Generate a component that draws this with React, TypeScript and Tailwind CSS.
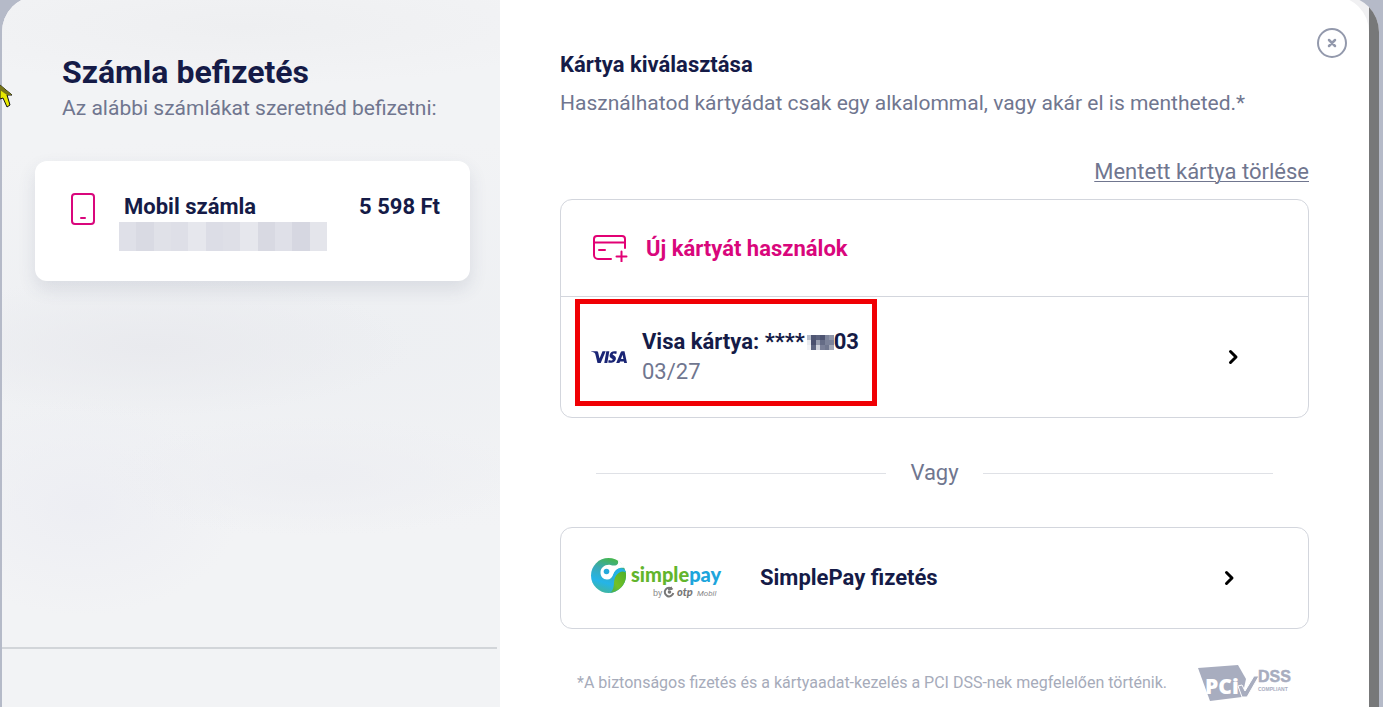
import type { ReactNode } from "react"

const MASK_COLORS = [
  "bg-[#dfe0e8]", "bg-[#d9dae3]", "bg-[#e0e1e8]", "bg-[#dedfe7]", "bg-[#e6e7ed]", "bg-[#dcdde6]",
  "bg-[#dedfe7]", "bg-[#e6e7ed]", "bg-[#d8d9e2]", "bg-[#dfe0e8]", "bg-[#d6d7e1]", "bg-[#e4e5eb]",
]

const DIGIT_COLORS = [
  "bg-[#b9bfcc]", "bg-[#4f5673]", "bg-[#5a617d]", "bg-[#4d5471]", "bg-[#7d849b]", "bg-[#8f95a9]",
  "bg-[#e8eaef]", "bg-[#4a506e]", "bg-[#969cae]", "bg-[#656c86]", "bg-[#7b8299]", "bg-[#7c839b]",
  "bg-[#f3f4f7]", "bg-[#5f6681]", "bg-[#d0d3dc]", "bg-[#7a8098]", "bg-[#70778f]", "bg-[#a2a7b7]",
]

function PhoneIcon() {
  return (
    <svg width="26" height="34" viewBox="0 0 26 34" fill="none" stroke="#d9067c" strokeWidth="2" aria-hidden="true">
      <rect x="2" y="2" width="22" height="30" rx="3" />
      <path d="M11 26h4" strokeLinecap="round" />
    </svg>
  )
}

function NewCardIcon() {
  return (
    <svg width="36" height="28" viewBox="0 0 36 28" fill="none" stroke="#e20074" strokeWidth="2" strokeLinecap="round" strokeLinejoin="round" aria-hidden="true">
      <path d="M19 25H6a4 4 0 0 1-4-4V5a3 3 0 0 1 3-3h25a3 3 0 0 1 3 3v9" />
      <path d="M2 8.500h31M7 16h6M29.500 17.500v10M24.500 22.500h10" />
    </svg>
  )
}

function VisaLogo() {
  return (
    <svg width="36" height="16" viewBox="0 0 36 16" role="img" aria-label="Visa">
      <path d="M0 2.200h5.500c1 0 1.500.4 1.700 1.300l1.300 6.100 3-7.400h3.200L9.700 14H6.500L4.200 4.700C3.500 3.500 1.500 2.800 0 2.600z" fill="#1a2575" />
      <path d="M15.300 2.200h3L16.300 14h-3z" fill="#1a2575" />
      <path d="M25.800 2.600 25.300 5c-1.300-.6-3.500-.8-3.600.3 0 1.100 3.300 1.400 3.200 4.200-.1 3.300-3.600 4.900-7.700 4.100l.5-2.500c1.800.7 4 .6 4-.6.100-1.200-3.100-1.300-3.100-4.100.1-3.300 3.800-5 7.200-3.800z" fill="#1a2575" />
      <path d="M31 2.200h2.500L36 14h-2.800l-.3-1.600h-3.800l-.7 1.600h-3.200l4.500-10.700c.3-.7.700-1.100 1.300-1.100zm.5 3.600L30 10h2.400z" fill="#1a2575" fillRule="evenodd" />
    </svg>
  )
}

function SimplePayLogo() {
  return (
    <svg width="136" height="44" viewBox="0 0 136 44" role="img" aria-label="simplepay by otp Mobil">
      <defs>
        <linearGradient id="ball" x1="0.600" y1="0" x2="0.300" y2="1">
          <stop offset="0" stopColor="#45b649" />
          <stop offset="0.350" stopColor="#3aa9b4" />
          <stop offset="0.700" stopColor="#25b4e8" />
          <stop offset="1" stopColor="#42b69b" />
        </linearGradient>
        <linearGradient id="leaf" x1="1" y1="0" x2="0" y2="1">
          <stop offset="0" stopColor="#4aae2c" />
          <stop offset="0.600" stopColor="#74c024" />
          <stop offset="1" stopColor="#3cab5c" />
        </linearGradient>
      </defs>
      <circle cx="19.500" cy="19.500" r="17.500" fill="url(#ball)" />
      <path d="M36.500 15c2.500 10-4 20.500-16 22 4-2 4-6 4.500-10C25.500 19 30 12 36.500 15z" fill="url(#leaf)" />
      <path d="M32 7c1.500 1.300 3 3.200 3.800 5-6-1-9.800 2-11.300 6-1.300 3.500-3 5.500-6.500 5.500-4 0-6.500-3-6.500-7 0-5 5-8.500 10-7.500 3 1 6 1 7.500-1.500.3-1.500.2-2.500-.5-3.500 1.500.8 2.500 1.800 3.500 3z" fill="#fff" />
      <path d="M24 25c-1.500-7 4-14 9-12.500 2.500.6 4 2.500 3.500 4-4-3-9 .5-12.500 8.500z" fill="#22b2e6" />
      <circle cx="17.500" cy="15.500" r="2.800" fill="#25a9dc" />
      <text x="42" y="26" fontFamily="Lato, sans-serif" fontSize="20" fontWeight="900" fill="#62b52c">
        simple<tspan fill="#1da5dc">pay</tspan>
      </text>
      <text x="64" y="40" fontFamily="Roboto, sans-serif" fontSize="9" fill="#8b8b8b">by</text>
      <path d="M83.500 33.500a4.300 4.300 0 1 0 .8 3.500M79 33.500l4-2" fill="none" stroke="#777" strokeWidth="2" />
      <circle cx="80.500" cy="36" r="1.800" fill="#777" />
      <text x="88" y="40" fontFamily="Lato, sans-serif" fontSize="11" fontWeight="900" fontStyle="italic" fill="#777">otp</text>
      <text x="108" y="40" fontFamily="Roboto, sans-serif" fontSize="8" fontStyle="italic" fill="#8b8b8b">Mobil</text>
    </svg>
  )
}

function PciLogo() {
  return (
    <svg width="94" height="38" viewBox="0 0 94 38" role="img" aria-label="PCI DSS compliant">
      <path d="M0 4 40 1l8 14-4 18-32 4z" fill="#a8adbf" />
      <text x="7" y="30" fontFamily="Open Sans, sans-serif" fontSize="21" fontWeight="800" fill="#fff">PCi</text>
      <path d="m40 22 4-1 3 6 9-15h5L49 33h-5z" fill="#a8adbf" stroke="#fff" strokeWidth="1" />
      <text x="60" y="18" fontFamily="Liberation Sans, sans-serif" fontSize="16" fontWeight="700" fill="#a8adbf" stroke="#a8adbf" strokeWidth="0.500">DSS</text>
      <text x="60" y="27" fontFamily="Liberation Sans, sans-serif" fontSize="5" fontWeight="700" fill="#a8adbf">COMPLIANT</text>
    </svg>
  )
}

function Chevron() {
  return (
    <svg width="12" height="16" viewBox="0 0 12 16" fill="none" stroke="#000" strokeWidth="3" strokeLinecap="round" strokeLinejoin="round" aria-hidden="true">
      <path d="m3.500 2.500 5.500 5.500-5.500 5.500" />
    </svg>
  )
}

function PointerMark() {
  return (
    <svg className="absolute top-[84px] left-0" width="13" height="24" viewBox="0 0 13 24" aria-hidden="true">
      <path d="M0 1 12 11H7l3 10-3 2-4-9-3 1z" fill="#e8e800" stroke="#111" strokeWidth="1" />
      <path d="m0 1 12 10H7L0 6z" fill="#77751a" />
    </svg>
  )
}

function InvoiceCard({ title, amount }: { title: string; amount: string }) {
  return (
    <div className="mr-[30px] ml-[33px] flex min-h-[120px] items-start rounded-xl bg-white pt-[31px] pr-[30px] pl-[35px] shadow-[0_8px_18px_rgba(60,65,100,0.12)]">
      <PhoneIcon />
      <div className="ml-[23px]">
        <div className="pl-[5px] text-[22px] leading-[30px] font-bold">{title}</div>
        <div className="flex h-[29px] w-[208px]" aria-hidden="true">
          {MASK_COLORS.map((color, i) => (
            <span key={i} className={`flex-1 ${color}`} />
          ))}
        </div>
      </div>
      <div className="ml-auto text-[22px] leading-[30px] font-bold">{amount}</div>
    </div>
  )
}

function PaymentPanel({ children }: { children: ReactNode }) {
  return <div className="rounded-xl border border-[#d3d6dd] bg-white">{children}</div>
}

export default function App() {
  return (
    <div className="relative h-screen overflow-hidden bg-[#b5bac8] font-['Roboto','Liberation_Sans',sans-serif] text-[#151b47]">
      <div className="-mt-1 mr-1 ml-0.5 flex min-h-[calc(100vh+4px)] overflow-hidden rounded-t-[36px] bg-[#f0f0f2]">
        <aside className="w-[498px] shrink-0 bg-[#f2f3f5] bg-[radial-gradient(ellipse_260px_70px_at_150px_350px,#e9eaee,transparent),radial-gradient(ellipse_220px_60px_at_310px_480px,#edeef2,transparent),radial-gradient(ellipse_160px_110px_at_80px_510px,#edeef3,transparent),radial-gradient(ellipse_350px_60px_at_240px_30px,#eeeff1,transparent),radial-gradient(ellipse_700px_200px_at_300px_340px,#edeff2,transparent)] pt-14">
          <div className="pl-[60px]">
            <h1 className="text-[32px] leading-10 font-bold">Számla befizetés</h1>
            <p className="mt-0.5 text-[21px] leading-7 text-[#70768f]">Az alábbi számlákat szeretnéd befizetni:</p>
          </div>
          <div className="mt-[39px]">
            <InvoiceCard title="Mobil számla" amount="5 598 Ft" />
          </div>
          <hr className="mt-[366px] mr-[3px] border-t-2 border-[#d2d5d9]" />
        </aside>

        <main className="relative min-w-0 flex-1 rounded-tr-[36px] bg-white px-[60px] pt-[55px]">
          <button type="button" aria-label="Bezárás" className="absolute top-8 right-[22px] cursor-pointer">
            <svg width="30" height="30" viewBox="0 0 30 30" fill="none" stroke="#9399ac" strokeLinecap="round">
              <circle cx="15" cy="15" r="14" strokeWidth="2" />
              <path d="m12 12 6 6M18 12l-6 6" strokeWidth="2.500" />
            </svg>
          </button>

          <h2 className="text-[22px] leading-7 font-bold">Kártya kiválasztása</h2>
          <p className="mt-2.5 text-[21px] leading-7 text-[#70768f]">
            Használhatod kártyádat csak egy alkalommal, vagy akár el is mentheted.*
          </p>
          <div className="mt-[41px] mb-[13px] text-right text-[22px] leading-7 text-[#70768f]">
            <a href="#torles" className="underline decoration-1 underline-offset-2">Mentett kártya törlése</a>
          </div>

          <PaymentPanel>
            <button type="button" className="flex h-[97px] w-full cursor-pointer items-center gap-[18px] border-b border-[#d3d6dd] pl-[31px] text-left text-[22px] font-bold text-[#d9067c]">
              <NewCardIcon />
              Új kártyát használok
            </button>
            <div className="relative">
              <button type="button" className="flex h-[120px] w-full cursor-pointer items-center pr-[69px] pl-[30px] text-left">
                <VisaLogo />
                <span className="ml-[15px] flex flex-1 flex-col text-[22px] leading-[30px]">
                  <span className="flex items-center font-bold">
                    Visa kártya: ****
                    <span className="ml-0.5 grid w-[27px] grid-cols-6" aria-hidden="true">
                      {DIGIT_COLORS.map((color, i) => (
                        <span key={i} className={`h-[5px] ${color}`} />
                      ))}
                    </span>
                    03
                  </span>
                  <span className="text-[#70768f]">03/27</span>
                </span>
                <Chevron />
              </button>
              <div className="pointer-events-none absolute top-0.5 left-3.5 h-[107px] w-[302px] border-[5px] border-[#f00004]" />
            </div>
          </PaymentPanel>

          <div className="mx-9 mt-[41px] mb-10 flex items-center gap-6 text-[22px] leading-7 text-[#70768f]">
            <span className="h-px flex-1 bg-[#dfe1e6]" />
            Vagy
            <span className="h-px flex-1 bg-[#dfe1e6]" />
          </div>

          <PaymentPanel>
            <button type="button" className="flex h-[100px] w-full cursor-pointer items-center pr-[73px] pl-7 text-left">
              <SimplePayLogo />
              <span className="ml-[35px] flex-1 text-[22px] leading-7 font-bold">SimplePay fizetés</span>
              <Chevron />
            </button>
          </PaymentPanel>

          <div className="mt-[35px] flex items-center justify-between px-[17px]">
            <p className="text-[16px] leading-5 text-[#a6abba]">
              *A biztonságos fizetés és a kártyaadat-kezelés a PCI DSS-nek megfelelően történik.
            </p>
            <PciLogo />
          </div>
        </main>

        <div className="w-2.5 shrink-0 bg-[#777879]" />
      </div>
      <PointerMark />
    </div>
  )
}
